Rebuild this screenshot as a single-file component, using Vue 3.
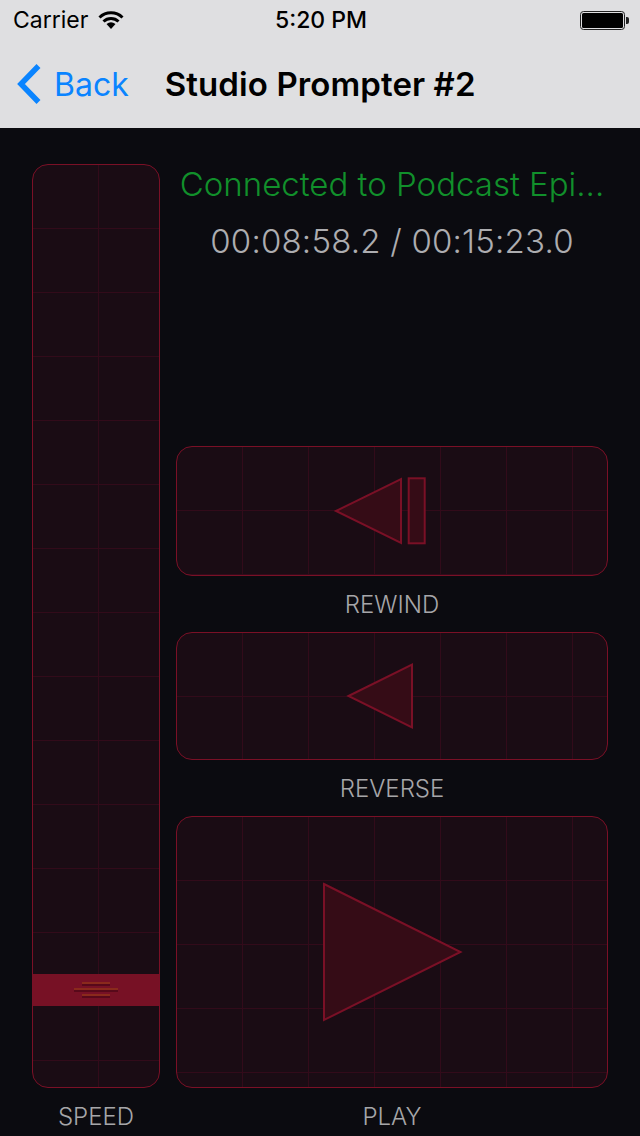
<script setup>
import { ref } from 'vue';

const status = ref('Connected to Podcast Epi...');
const timecode = ref('00:08:58.2 / 00:15:23.0');
</script>

<template>
  <div class="screen">
    <header class="top-bar">
      <div class="status-bar">
        <div class="status-left">
          <span>Carrier</span>
          <svg class="wifi" width="26" height="20" viewBox="0 0 26 20">
            <path d="M1.500 7.500A16.500 16.500 0 0 1 24.500 7.500" fill="none" stroke="#000" stroke-width="3" />
            <path d="M5.500 11.500A10.800 10.800 0 0 1 20.500 11.500" fill="none" stroke="#000" stroke-width="3" />
            <path d="M8.500 14Q13 10.500 17.500 14L13 19Z" fill="#000" />
          </svg>
        </div>
        <div class="status-time">5:20 PM</div>
        <div class="status-right">
          <svg width="50" height="20" viewBox="0 0 50 20">
            <rect x="1.500" y="1.500" width="44" height="18" rx="3" fill="none" stroke="#222" stroke-width="1" />
            <rect x="3" y="3" width="41" height="15" rx="1.500" fill="#000" />
            <path d="M47 7h1a2 2 0 0 1 2 2v3a2 2 0 0 1-2 2h-1Z" fill="#222" />
          </svg>
        </div>
      </div>
      <nav class="nav-bar">
        <a class="back">
          <svg width="30" height="44" viewBox="0 0 30 44">
            <path d="M25.500 4L8 22L25.500 40" fill="none" stroke="#0a84ff" stroke-width="5.500" />
          </svg>
          <span>Back</span>
        </a>
        <h1>Studio Prompter #2</h1>
      </nav>
    </header>

    <main class="content">
      <section class="speed-col">
        <div class="panel speed-track">
          <div class="speed-handle">
            <span class="grip short"></span>
            <span class="grip"></span>
            <span class="grip short"></span>
          </div>
        </div>
        <div class="label">SPEED</div>
      </section>

      <section class="right-col">
        <div class="status-text">{{ status }}</div>
        <div class="timecode">{{ timecode }}</div>

        <div class="controls">
          <div class="panel rewind">
            <svg width="430" height="128" viewBox="0 0 430 128">
              <path d="M159 64L224 32V96Z" class="shape" />
              <rect x="231.700" y="31.300" width="16" height="65" class="shape" />
            </svg>
          </div>
          <div class="label">REWIND</div>

          <div class="panel reverse">
            <svg width="430" height="126" viewBox="0 0 430 126">
              <path d="M171.500 63L235 31.500V94.500Z" class="shape" />
            </svg>
          </div>
          <div class="label">REVERSE</div>

          <div class="panel play">
            <svg width="430" height="270" viewBox="0 0 430 270">
              <path d="M147 67L283.500 135L147 203Z" class="shape" />
            </svg>
          </div>
          <div class="label">PLAY</div>
        </div>
      </section>
    </main>
  </div>
</template>

<style scoped>
.screen {
  width: 640px;
  height: 1136px;
  overflow: hidden;
  display: flex;
  flex-direction: column;
  background-color: #0b0b10;
  font-family: Inter, "Liberation Sans", sans-serif;
}

.top-bar {
  height: 128px;
  flex: none;
  background-color: #dfdfe1;
}

.status-bar {
  height: 40px;
  padding: 0 11px 0 13px;
  display: flex;
  align-items: center;
  font-size: 23px;
  color: #000;
}

.status-left,
.status-right {
  flex: 1;
  display: flex;
  align-items: center;
}

.status-left {
  gap: 10px;
}

.status-right {
  justify-content: flex-end;
}

.status-time {
  font-weight: 500;
}

.nav-bar {
  height: 88px;
  padding-left: 13px;
  display: flex;
  align-items: center;
}

.back {
  display: flex;
  align-items: center;
  gap: 11px;
  color: #0a84ff;
  font-size: 32px;
}

h1 {
  margin: 0 0 0 36px;
  font-size: 33px;
  font-weight: 600;
  letter-spacing: 0.1px;
  color: #000;
}

.content {
  flex: 1;
  padding: 36px 32px 0;
  display: flex;
  gap: 16px;
}

.speed-col {
  width: 128px;
  flex: none;
}

.right-col {
  flex: 1;
  display: flex;
  flex-direction: column;
}

.panel {
  box-sizing: border-box;
  border: 1px solid #7a1026;
  border-radius: 16px;
  overflow: hidden;
  background-color: #1a0c14;
  background-image:
    linear-gradient(to right, transparent 65px, #320b1a 65px),
    linear-gradient(to bottom, transparent 63px, #320b1a 63px);
  background-size: 66px 64px;
  display: flex;
  align-items: center;
  justify-content: center;
}

.panel svg {
  flex: none;
  display: block;
}

.speed-track {
  position: relative;
  height: 924px;
}

.speed-handle {
  position: absolute;
  left: 0;
  right: 0;
  top: 809px;
  height: 32px;
  box-sizing: border-box;
  padding-bottom: 2px;
  background-color: #771125;
  display: flex;
  flex-direction: column;
  align-items: center;
  justify-content: center;
  gap: 4px;
}

.grip {
  width: 44px;
  height: 2px;
  background-color: #8a2a1c;
  box-shadow: 0 2px 0 #58091a;
}

.grip.short {
  width: 28px;
}

.label {
  height: 56px;
  line-height: 57px;
  text-align: center;
  font-size: 24px;
  font-weight: 300;
  color: #a6a6a9;
}

.status-text {
  height: 40px;
  line-height: 40px;
  text-align: center;
  font-size: 33px;
  font-weight: 300;
  color: #11902b;
  white-space: nowrap;
}

.timecode {
  margin-top: 18px;
  height: 40px;
  line-height: 38px;
  text-align: center;
  font-size: 33px;
  font-weight: 300;
  letter-spacing: 0.2px;
  color: #adadb0;
  white-space: nowrap;
}

.controls {
  margin-top: auto;
}

.rewind {
  height: 130px;
}

.reverse {
  height: 128px;
}

.play {
  height: 272px;
}

.shape {
  fill: #350c16;
  stroke: #7a1026;
  stroke-width: 2;
}
</style>
